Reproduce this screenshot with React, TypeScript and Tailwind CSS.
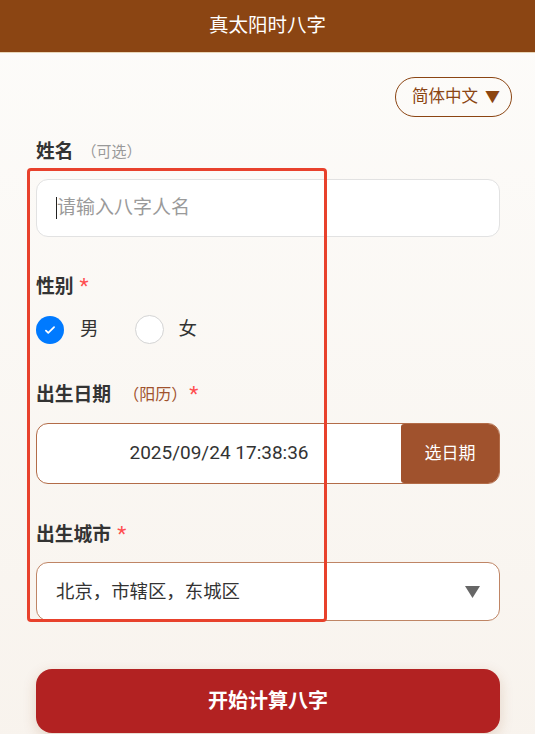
import React from "react";

const font = { fontFamily: '"Roboto", "Noto Sans CJK SC", sans-serif' };

function Label({ children }: { children: React.ReactNode }) {
  return (
    <div className="flex h-[26px] items-center text-[18.8px] font-bold text-[#333333] leading-none">
      {children}
    </div>
  );
}

function Star({ className = "ml-[6px]" }: { className?: string }) {
  return <span className={`${className} text-[21px] font-normal text-[#ff4d4f] leading-none relative top-[-1px]`}>*</span>;
}

export default function App() {
  return (
    <div
      className="relative min-h-[734px] w-full bg-gradient-to-b from-[#fdfcfa] to-[#f8f3ed] overflow-hidden"
      style={font}
    >
      <header className="flex h-[53px] items-center justify-center border-b border-[#e9d6b8] bg-[#8b4513]">
        <h1 className="text-[19.5px] font-normal text-white">真太阳时八字</h1>
      </header>

      <div className="pl-[36px] pr-[35px]">
        <div className="mt-[24px] flex justify-end mr-[-12px]">
          <button className="flex h-[40px] items-center gap-[7px] rounded-full border-[1.5px] border-[#8b4513] pl-[16px] pr-[11px] text-[16.5px] text-[#8b4513] leading-none">
            <span>简体中文</span>
            <span className="text-[15px]">▼</span>
          </button>
        </div>

        <div className="mt-[22px]">
          <Label>
            <span>姓名</span>
            <span className="ml-[8px] text-[15px] font-normal text-[#999999]">（可选）</span>
          </Label>
        </div>

        <div className="mt-[14px] flex h-[58px] items-center rounded-[12px] border border-[#e2e2e2] bg-white pl-[19px]">
          <span className="h-[22px] w-[1px] bg-[#222]"></span>
          <span className="text-[19px] text-[#9a9a9a]">请输入八字人名</span>
        </div>

        <div className="mt-[37px]">
          <Label>
            <span>性别</span>
            <Star />
          </Label>
        </div>

        <div className="mt-[15px] flex h-[29px] items-center">
          <span className="flex h-[28px] w-[28px] items-center justify-center rounded-full bg-[#007aff]">
            <svg width="14" height="14" viewBox="0 0 24 24" fill="none" stroke="white" strokeWidth="3" strokeLinecap="round" strokeLinejoin="round">
              <path d="M5 13l4 4L19 7" />
            </svg>
          </span>
          <span className="ml-[16px] text-[18.5px] text-[#333]">男</span>
          <span className="ml-[36px] h-[29px] w-[29px] rounded-full border border-[#d4d4d4] bg-white"></span>
          <span className="ml-[15px] text-[18.5px] text-[#333]">女</span>
        </div>

        <div className="mt-[38px]">
          <Label>
            <span>出生日期</span>
            <span className="ml-[12px] text-[16px] font-normal text-[#a0522d]">（阳历）</span>
            <Star className="ml-[2px]" />
          </Label>
        </div>

        <div className="mt-[15px] flex h-[61px] overflow-hidden rounded-[12px] border border-[#b36c48] bg-white">
          <div className="flex flex-1 items-center justify-center text-[19px] text-[#333]">
            2025/09/24 17:38:36
          </div>
          <button className="flex w-[98px] items-center justify-center rounded-l-[3px] bg-[#a0522d] text-[17px] text-white">
            选日期
          </button>
        </div>

        <div className="mt-[38px]">
          <Label>
            <span>出生城市</span>
            <Star />
          </Label>
        </div>

        <div className="mt-[14px] flex h-[59px] items-center justify-between rounded-[12px] border border-[#bf8565] bg-white pl-[19px] pr-[19px]">
          <span className="text-[18.4px] text-[#333]">北京，市辖区，东城区</span>
          <svg width="15" height="12" viewBox="0 0 15 12">
            <path d="M0 0 H15 L7.5 12 Z" fill="#666666" />
          </svg>
        </div>

        <button className="mt-[48px] flex h-[64px] w-full items-center justify-center rounded-[16px] bg-[#b22222] text-[20px] font-bold text-white shadow-[0_4px_14px_rgba(139,69,19,0.18)]">
          开始计算八字
        </button>
        <div className="h-[20px]"></div>
      </div>

      <div className="pointer-events-none absolute left-[27px] top-[168px] h-[454px] w-[300px] rounded-[4px] border-[3px] border-[#e8412c]"></div>
    </div>
  );
}
